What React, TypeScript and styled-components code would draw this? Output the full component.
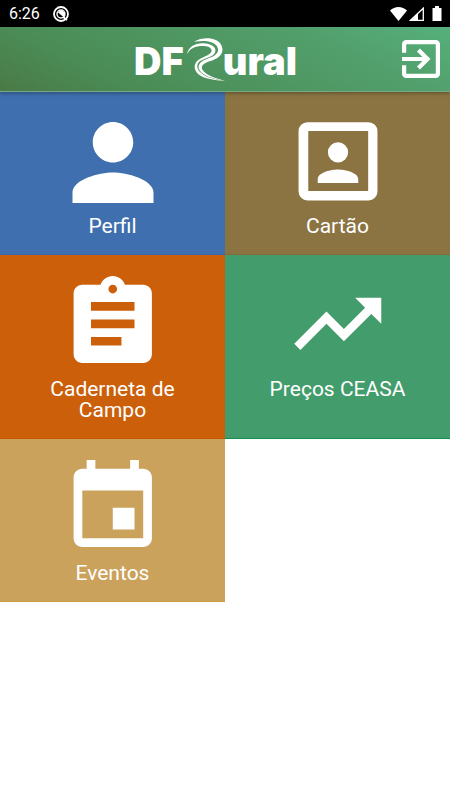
import * as React from 'react';
import styled, { createGlobalStyle } from 'styled-components';

const GlobalStyle = createGlobalStyle`
	body {
		margin: 0;
		background: #ffffff;
		font-family: Roboto, sans-serif;
	}
`;

const StatusBar = styled.div`
	display: flex;
	align-items: center;
	justify-content: space-between;
	height: 27px;
	padding: 0 8px 0 9px;
	background: #000000;
	color: #ffffff;
	font-size: 16px;
`;

const StatusGroup = styled.div<{ $gap: number }>`
	display: flex;
	align-items: center;
	gap: ${({ $gap }) => $gap}px;

	svg {
		display: block;
	}
`;

const Header = styled.header`
	position: relative;
	display: flex;
	align-items: center;
	height: 64px;
	padding: 0 10px 0 29px;
	border-bottom: 1px solid #76a985;
	background: linear-gradient(25deg, #4a7a46 0%, #4b8c56 25%, #52a06d 75%, #56b07b 100%);
	box-shadow: 0 1px 4px rgba(0, 0, 0, 0.35);
`;

const Logo = styled.h1`
	flex: 1;
	display: flex;
	align-items: center;
	justify-content: center;
	margin: 0;
	color: #ffffff;
	font-family: Inter, 'Open Sans', sans-serif;
	font-size: 38px;
	font-weight: 900;
	line-height: 64px;
`;

const LogoText = styled.span`
	padding-top: 3px;
`;

const LogoRoad = styled.svg`
	width: 42px;
	height: 48px;
	margin-right: -3px;
`;

const LogoutButton = styled.button`
	padding: 0;
	border: 0;
	background: none;
	color: #ffffff;
	cursor: pointer;

	svg {
		display: block;
	}
`;

const Menu = styled.nav`
	display: grid;
	grid-template-columns: 1fr 1fr;
`;

const Tile = styled.button<{ $color: string; $edge: string }>`
	display: flex;
	flex-direction: column;
	align-items: center;
	padding: 16px 40px 17px;
	border: 0;
	border-bottom: 1px solid ${({ $edge }) => $edge};
	background: ${({ $color }) => $color};
	color: #ffffff;
	font-family: inherit;
	font-size: 21px;
	line-height: 21px;
	text-align: center;
	cursor: pointer;
`;

const TileIcon = styled.svg`
	flex: none;
	width: 108px;
	height: 108px;
	fill: currentColor;
`;

// Material glyphs are drawn a little smaller than their tile box
const MATERIAL_BOX = '-0.36 -0.15 24.83 24.83';

const tiles = [
	{
		label: 'Perfil',
		color: '#3f6fae',
		edge: '#3a69ab',
		viewBox: '0 -2 512 512',
		path: 'M256 256c52.8 0 96-43.2 96-96s-43.2-96-96-96-96 43.2-96 96 43.2 96 96 96zm0 48c-63.6 0-192 32.4-192 96v48h384v-48c0-63.6-128.4-96-192-96z',
	},
	{
		label: 'Cartão',
		color: '#8b7442',
		edge: '#856c36',
		viewBox: '0 -5 512 512',
		path: 'M111 62h290a42 42 0 0 1 42 42v287a42 42 0 0 1-42 42H111a42 42 0 0 1-42-42V104a42 42 0 0 1 42-42zm4 42v284h284V104zM256 157a48 48 0 1 1 0 96 48 48 0 0 1 0-96zm0 130c32 0 96 14 96 46v18H160v-18c0-32 64-46 96-46z',
	},
	{
		label: 'Caderneta de Campo',
		color: '#cb5f0a',
		edge: '#c85600',
		viewBox: MATERIAL_BOX,
		path: 'M19 3h-4.18C14.4 1.84 13.3 1 12 1s-2.4.84-2.82 2H5c-1.1 0-2 .9-2 2v14c0 1.1.9 2 2 2h14c1.1 0 2-.9 2-2V5c0-1.1-.9-2-2-2zm-7 0c.55 0 1 .45 1 1s-.45 1-1 1-1-.45-1-1 .45-1 1-1zm2 14H7v-2h7v2zm3-4H7v-2h10v2zm0-4H7V7h10v2z',
	},
	{
		label: 'Preços CEASA',
		color: '#439c6b',
		edge: '#0f9150',
		viewBox: MATERIAL_BOX,
		path: 'M16 6l2.29 2.29-4.88 4.88-4-4L2 16.59 3.41 18l6-6 4 4 6.3-6.29L22 12V6z',
	},
	{
		label: 'Eventos',
		color: '#cba25c',
		edge: '#cc9a3c',
		viewBox: MATERIAL_BOX,
		path: 'M17 12h-5v5h5v-5zM16 1v2H8V1H6v2H5c-1.11 0-2 .9-2 2v14c0 1.1.89 2 2 2h14c1.1 0 2-.9 2-2V5c0-1.1-.9-2-2-2h-1V1h-2zm3 18H5V8h14v11z',
	},
];

function App() {
	return (
		<>
			<GlobalStyle />
			<StatusBar>
				<StatusGroup $gap={13}>
					<span>6:26</span>
					<svg width="16" height="16" viewBox="0 0 16 16" fill="none" stroke="#fff">
						<circle cx="8" cy="8" r="7" strokeWidth="1.8" />
						<circle cx="8" cy="8" r="4" strokeWidth="1.4" />
						<path d="M4.5 6l7 6 .5-5-3-3z" fill="#fff" stroke="none" />
						<path d="M10 11l4 3" strokeWidth="1.6" />
					</svg>
				</StatusGroup>
				<StatusGroup $gap={2}>
					<svg width="17" height="14" viewBox="0 0 17 14" fill="#fff">
						<path d="M8.5 14L0 3.5C2.5 1.3 5.4 0 8.5 0s6 1.3 8.5 3.5z" />
					</svg>
					<svg width="15" height="14" viewBox="0 0 15 14" fill="none" stroke="#fff">
						<path d="M1.5 13.3L14.3 1.2v12.1z" strokeWidth="1.3" />
						<path d="M9 6v7.5H2z" fill="#fff" stroke="none" />
					</svg>
					<svg width="16" height="16" viewBox="0 0 16 16" fill="#fff">
						<path d="M9 2V0h4v2h2.5v13h-9V2z" />
					</svg>
				</StatusGroup>
			</StatusBar>
			<Header>
				<Logo aria-label="DF Rural">
					<LogoText>DF</LogoText>
					<LogoRoad viewBox="192 20 126 144" fill="#fff" aria-hidden="true">
						<path d="M222 40C250 24 292 26 305 52C315 80 290 92 268 99C242 108 240 120 254 132C268 145 290 150 315 158C285 152 262 147 246 134C228 118 234 102 260 92C286 82 300 74 292 55C280 36 250 36 222 40z" />
						<path d="M201 78C205 56 225 44 250 45C276 46 291 58 285 73C278 86 254 89 239 99C225 112 233 128 251 140C270 150 290 154 315 158C285 156 252 152 235 138C219 123 221 103 238 93C254 83 272 80 275 68C275 57 262 53 248 53C225 53 210 60 201 78z" />
					</LogoRoad>
					<LogoText>ural</LogoText>
				</Logo>
				<LogoutButton type="button" aria-label="Sair">
					<svg width="38" height="38" viewBox="3 3 18 18" fill="currentColor">
						<path d="M10.09 15.59L11.5 17l5-5-5-5-1.41 1.41L12.67 11H3v2h9.67l-2.58 2.59zM19 3H5c-1.11 0-2 .9-2 2v4h2V5h14v14H5v-4H3v4c0 1.1.89 2 2 2h14c1.1 0 2-.9 2-2V5c0-1.1-.9-2-2-2z" />
					</svg>
				</LogoutButton>
			</Header>
			<Menu>
				{tiles.map((tile) => (
					<Tile key={tile.label} type="button" $color={tile.color} $edge={tile.edge}>
						<TileIcon viewBox={tile.viewBox} fillRule="evenodd" aria-hidden="true">
							<path d={tile.path} />
						</TileIcon>
						<span>{tile.label}</span>
					</Tile>
				))}
			</Menu>
		</>
	);
}

export default App;
